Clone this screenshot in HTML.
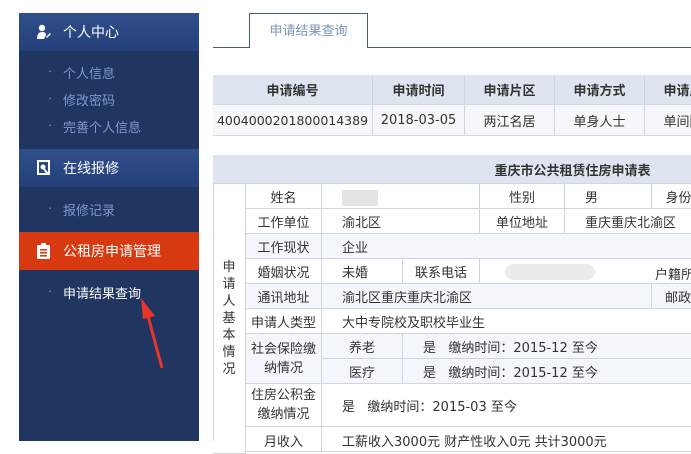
<!DOCTYPE html><html><head><meta charset="utf-8"><style>
*{margin:0;padding:0;box-sizing:border-box}
body{width:691px;height:441px;overflow:hidden;background:#fff;font-family:"Liberation Sans","Noto Sans CJK SC",sans-serif;font-size:13px;position:relative}
.a{position:absolute}
.sb{left:19px;top:13px;width:180px;height:428px;background:#203660}
.hd{left:19px;width:180px;height:38px;background:linear-gradient(#304f8a,#24407a);color:#fff;font-size:14px;line-height:38px;padding-left:44px}
.it{left:63px;color:#7f96d4;font-size:13px}
.it:before{content:"·";position:absolute;left:-15px;color:#8496c8}
.c{position:absolute;border-right:1px solid #cfd6e2;border-bottom:1px solid #cfd6e2;text-align:center;color:#333;display:flex;align-items:center;justify-content:center;font-size:13px;font-family:"DejaVu Sans","Noto Sans CJK SC",sans-serif;white-space:nowrap;overflow:hidden}
.l{justify-content:flex-start;padding-left:20px}
</style></head><body>
<div class="a sb"></div>
<div class="a hd" style="top:13px">个人中心</div>
<svg class="a" style="left:36px;top:24px" width="16" height="16" viewBox="0 0 16 16"><circle cx="6" cy="4" r="3.2" fill="#fff"/><path d="M1 15c0-5 2-7 5-7s4 1 4 3l-2 4z" fill="#fff"/><path d="M10 13l4-4 1 1-4 4z" fill="#fff"/></svg>
<div class="a it" style="top:63px">个人信息</div>
<div class="a it" style="top:90px">修改密码</div>
<div class="a it" style="top:117px">完善个人信息</div>
<div class="a hd" style="top:149px">在线报修</div>
<svg class="a" style="left:37px;top:160px" width="14" height="16" viewBox="0 0 14 16"><rect x="1" y="1" width="11" height="13" fill="none" stroke="#fff" stroke-width="2"/><circle cx="6" cy="7" r="2.5" fill="#fff"/><path d="M7 9l4 5" stroke="#fff" stroke-width="2"/></svg>
<div class="a it" style="top:200px">报修记录</div>
<div class="a hd" style="top:232px;background:#d73a10">公租房申请管理</div>
<svg class="a" style="left:37px;top:243px" width="13" height="16" viewBox="0 0 13 16"><rect x="0" y="2" width="13" height="14" rx="1" fill="#fff"/><rect x="4" y="0" width="5" height="4" fill="#fff"/><rect x="3" y="6" width="7" height="1.6" fill="#d73a10"/><rect x="3" y="9" width="7" height="1.6" fill="#d73a10"/><rect x="3" y="12" width="7" height="1.6" fill="#d73a10"/></svg>
<div class="a it" style="top:283px;color:#fff">申请结果查询</div>
<svg class="a" style="left:135px;top:296px" width="30" height="75" viewBox="0 0 30 75"><path d="M27 72L13 20" stroke="#e8352c" stroke-width="3"/><path d="M6 2L20 20L8 23z" fill="#e8352c"/></svg>
<div class="a" style="left:213px;top:47px;width:478px;height:1px;background:#4a5d78"></div>
<div class="a" style="left:249px;top:13px;width:119px;height:35px;border:1px solid #4a5d78;border-bottom:none;background:#fff;color:#7a95b8;font-size:13px;line-height:34px;text-align:center">申请结果查询</div>
<div class="a" style="left:213px;top:75px;width:478px;height:61px;border-left:1px solid #cfd6e2;border-top:1px solid #cfd6e2"></div>
<div class="a" style="left:213px;top:75px;width:478px;height:30px;background:#dfe5f0"></div>
<div class="c" style="left:213px;top:75px;width:160px;height:30px;font-weight:bold">申请编号</div>
<div class="c" style="left:373px;top:75px;width:92px;height:30px;font-weight:bold">申请时间</div>
<div class="c" style="left:465px;top:75px;width:90px;height:30px;font-weight:bold">申请片区</div>
<div class="c" style="left:555px;top:75px;width:90px;height:30px;font-weight:bold">申请方式</div>
<div class="c" style="left:645px;top:75px;width:90px;height:30px;font-weight:bold">申请户型</div>
<div class="a" style="left:213px;top:105px;width:478px;height:31px;background:#f5f7fb"></div>
<div class="c" style="left:213px;top:105px;width:160px;height:31px;font-size:12.5px">4004000201800014389</div>
<div class="c" style="left:373px;top:105px;width:92px;height:31px">2018-03-05</div>
<div class="c" style="left:465px;top:105px;width:90px;height:31px">两江名居</div>
<div class="c" style="left:555px;top:105px;width:90px;height:31px">单身人士</div>
<div class="c" style="left:645px;top:105px;width:90px;height:31px">单间配套</div>
<div class="a" style="left:213px;top:155px;width:478px;height:286px;border-left:1px solid #cfd6e2;border-top:1px solid #cfd6e2"></div>
<div class="c" style="left:213px;top:155px;width:600px;height:29px;background:#dfe5f0;font-weight:bold;padding-left:120px">重庆市公共租赁住房申请表</div>
<div class="c" style="left:213px;top:184px;width:33px;height:270px;line-height:17px;flex-direction:column">申<br>请<br>人<br>基<br>本<br>情<br>况</div>
<div class="a" style="left:246px;top:234px;width:445px;height:25px;background:#f3f6fa"></div>
<div class="a" style="left:246px;top:284px;width:445px;height:25px;background:#f3f6fa"></div>
<div class="a" style="left:246px;top:334px;width:445px;height:50px;background:#f3f6fa"></div>
<div class="c" style="left:246px;top:184px;width:76px;height:25px">姓名</div>
<div class="c" style="left:322px;top:184px;width:158px;height:25px"></div>
<div class="a" style="left:342px;top:190px;width:36px;height:16px;background:#e4e4e4"></div>
<div class="c" style="left:480px;top:184px;width:85px;height:25px">性别</div>
<div class="c l" style="left:565px;top:184px;width:87px;height:25px">男</div>
<div class="c" style="left:652px;top:184px;width:80px;height:25px">身份证号</div>
<div class="c" style="left:246px;top:209px;width:76px;height:25px">工作单位</div>
<div class="c l" style="left:322px;top:209px;width:158px;height:25px">渝北区</div>
<div class="c" style="left:480px;top:209px;width:85px;height:25px">单位地址</div>
<div class="c l" style="left:565px;top:209px;width:200px;height:25px">重庆重庆北渝区</div>
<div class="c" style="left:246px;top:234px;width:76px;height:25px">工作现状</div>
<div class="c l" style="left:322px;top:234px;width:400px;height:25px">企业</div>
<div class="c" style="left:246px;top:259px;width:76px;height:25px">婚姻状况</div>
<div class="c l" style="left:322px;top:259px;width:81px;height:25px">未婚</div>
<div class="c" style="left:403px;top:259px;width:77px;height:25px">联系电话</div>
<div class="c" style="left:480px;top:259px;width:300px;height:25px"></div>
<div class="a" style="left:655px;top:264px;font-size:13px;color:#333;white-space:nowrap">户籍所在</div>
<div class="a" style="left:505px;top:264px;width:90px;height:16px;background:#ececec;border-radius:8px"></div>
<div class="c" style="left:246px;top:284px;width:76px;height:25px">通讯地址</div>
<div class="c l" style="left:322px;top:284px;width:330px;height:25px">渝北区重庆重庆北渝区</div>
<div class="c" style="left:652px;top:284px;width:80px;height:25px;justify-content:flex-start;padding-left:13px">邮政编码</div>
<div class="c" style="left:246px;top:309px;width:76px;height:25px">申请人类型</div>
<div class="c l" style="left:322px;top:309px;width:400px;height:25px">大中专院校及职校毕业生</div>
<div class="c" style="left:246px;top:334px;width:76px;height:50px;line-height:19px;white-space:normal">社会保险缴<br>纳情况</div>
<div class="c" style="left:322px;top:334px;width:81px;height:25px">养老</div>
<div class="c l" style="left:403px;top:334px;width:400px;height:25px">是&nbsp;&nbsp;&nbsp;缴纳时间：2015-12 至今</div>
<div class="c" style="left:322px;top:359px;width:81px;height:25px">医疗</div>
<div class="c l" style="left:403px;top:359px;width:400px;height:25px">是&nbsp;&nbsp;&nbsp;缴纳时间：2015-12 至今</div>
<div class="c" style="left:246px;top:384px;width:76px;height:43px;line-height:19px;white-space:normal">住房公积金<br>缴纳情况</div>
<div class="c l" style="left:322px;top:384px;width:400px;height:43px">是&nbsp;&nbsp;&nbsp;缴纳时间：2015-03 至今</div>
<div class="c" style="left:246px;top:427px;width:76px;height:25px;align-items:flex-start;padding-top:4px">月收入</div>
<div class="c l" style="left:322px;top:427px;width:400px;height:25px;align-items:flex-start;padding-top:4px">工薪收入3000元 财产性收入0元 共计3000元</div>
</body></html>
